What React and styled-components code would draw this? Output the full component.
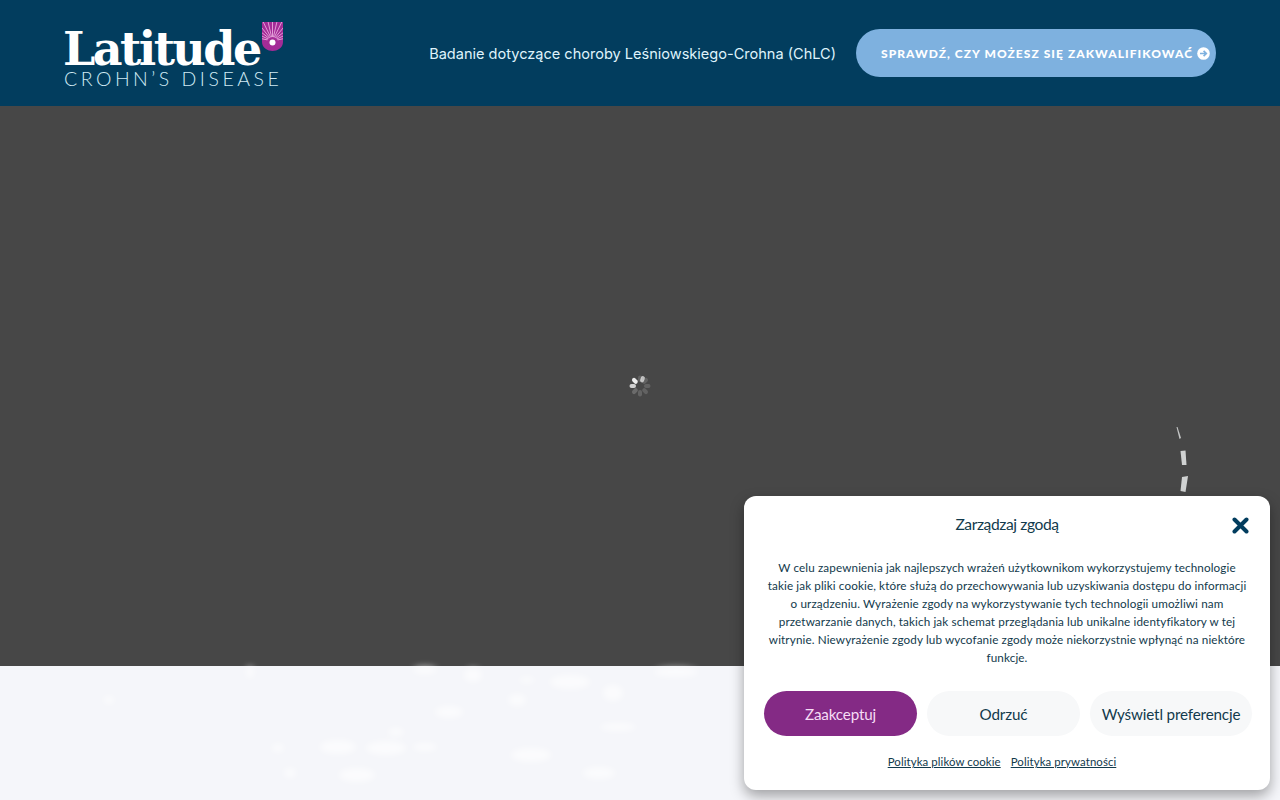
import React from "react";
import styled, { createGlobalStyle } from "styled-components";

const Global = createGlobalStyle`
  html, body { margin: 0; padding: 0; height: 100%; overflow: hidden; background: #f5f6fa; }
  * { box-sizing: border-box; }
`;

const Page = styled.div`
  position: relative;
  width: 1280px;
  height: 800px;
  overflow: hidden;
  display: flex;
  flex-direction: column;
`;

const Header = styled.header`
  height: 106px;
  flex: none;
  background: #023d5e;
  display: flex;
  align-items: center;
  justify-content: space-between;
  padding: 0 64px;
`;

const Logo = styled.div`
  position: relative;
  width: 220px;
  height: 68px;
  margin-top: 3px;
  display: flex;
  flex-direction: column;
`;

const LogoWord = styled.div`
  font-family: "DejaVu Serif", serif;
  font-weight: 700;
  font-size: 46px;
  line-height: 42px;
  margin-top: 7px;
  margin-left: -1px;
  letter-spacing: -2.55px;
  color: #fff;
  white-space: nowrap;
`;

const LogoSub = styled.div`
  font-family: "Lato", sans-serif;
  font-weight: 300;
  font-size: 19.5px;
  line-height: 18px;
  letter-spacing: 3.5px;
  color: #cfeaf4;
  white-space: nowrap;
`;

const LogoBadge = styled.svg`
  position: absolute;
  right: 0;
  top: 0;
`;

const Nav = styled.nav`
  display: flex;
  align-items: center;
  gap: 20px;
`;

const NavLink = styled.a`
  font-family: "Inter", sans-serif;
  font-size: 14.56px;
  font-weight: 400;
  color: #dff3fb;
  white-space: nowrap;
  position: relative;
  top: 1px;
`;

const Cta = styled.a`
  width: 360px;
  height: 48px;
  border-radius: 24px;
  background: #7eb1df;
  display: flex;
  align-items: center;
  padding-left: 25px;
  gap: 4px;
  color: #fff;
  font-family: "Lato", sans-serif;
  font-weight: 900;
  font-size: 12px;
  letter-spacing: 1.05px;
  white-space: nowrap;
`;

const Hero = styled.section`
  position: relative;
  height: 560px;
  flex: none;
  background: #474747;
`;

const Spinner = styled.svg`
  position: absolute;
  left: 628px;
  top: 268px;
  filter: blur(0.7px);
`;

const Road = styled.svg`
  position: absolute;
  left: 1170px;
  top: 318px;
`;

const Lower = styled.section`
  flex: 1;
  position: relative;
  background: #f5f6fa;
`;

const Blobs = styled.svg`
  position: absolute;
  inset: 0;
  filter: blur(3px);
`;

const Dialog = styled.aside`
  position: absolute;
  left: 744px;
  top: 496px;
  width: 526px;
  height: 294px;
  background: #fff;
  border-radius: 12px;
  box-shadow: 0 6px 14px rgba(0, 0, 0, 0.35);
  color: #123a4c;
  font-family: "Lato", sans-serif;
  display: flex;
  flex-direction: column;
  align-items: center;
  padding: 18px 20px 0;
`;

const Title = styled.h2`
  margin: 0;
  font-family: "Lato", sans-serif;
  font-weight: 400;
  font-size: 15.6px;
  letter-spacing: -0.4px;
  line-height: 20px;
  color: #123a4c;
  height: 20px;
`;

const Close = styled.svg`
  position: absolute;
  right: 21px;
  top: 21px;
`;

const Body = styled.p`
  margin: 24px 0 0;
  font-size: 11.7px;
  line-height: 18px;
  letter-spacing: 0.12px;
  text-align: center;
  width: 486px;
  white-space: nowrap;
  color: #123a4c;
`;

const Buttons = styled.div`
  display: grid;
  grid-template-columns: 153px 153px 162px;
  gap: 10px;
  margin-top: 25px;
  width: 486px;
`;

const Btn = styled.button`
  height: 45px;
  border: 0;
  padding: 0;
  border-radius: 23px;
  background: ${p => (p.$primary ? "#842a85" : "#f7f8f9")};
  color: ${p => (p.$primary ? "#f6dcf5" : "#123a4c")};
  font-family: "Lato", sans-serif;
  font-size: 15.2px;
  letter-spacing: -0.15px;
  white-space: nowrap;
`;

const Links = styled.div`
  display: flex;
  gap: 10px;
  margin-top: 17px;
  margin-right: 10px;
`;

const PolicyLink = styled.a`
  font-size: 11.4px;
  line-height: 18px;
  letter-spacing: 0.1px;
  color: #123a4c;
  text-decoration: underline;
`;

const rays = Array.from({ length: 13 }, (_, i) => -78 + i * 13);

const blobs = [
  [473, 9, 9, 7], [425, 4, 12, 4], [570, 16, 20, 7], [613, 27, 10, 8],
  [517, 34, 9, 6], [449, 46, 14, 6], [527, 14, 8, 3], [338, 81, 18, 7],
  [386, 82, 20, 7], [425, 81, 12, 4], [531, 89, 20, 7], [599, 107, 16, 6],
  [357, 109, 18, 7], [290, 107, 6, 5], [278, 82, 6, 4], [618, 61, 18, 4],
  [676, 6, 22, 5], [396, 66, 8, 4], [109, 34, 5, 4], [250, 6, 4, 6],
];

export default function App() {
  return (
    <Page>
      <Global />
      <Header>
        <Logo>
          <LogoWord>Latitude</LogoWord>
          <LogoSub>CROHN’S DISEASE</LogoSub>
          <LogoBadge width="23" height="31" viewBox="0 0 23 31">
            <path d="M1 1 H22 V21 C22 27 16 30 11.5 30 C7 30 1 27 1 21 Z" fill="#a42c97" />
            <clipPath id="shield">
              <path d="M1 1 H22 V21 C22 27 16 30 11.5 30 C7 30 1 27 1 21 Z" />
            </clipPath>
            <g clipPath="url(#shield)">
              {rays.map(a => (
                <line
                  key={a}
                  x1="11.5"
                  y1="20"
                  x2={11.5 + 26 * Math.sin((a * Math.PI) / 180)}
                  y2={20 - 26 * Math.cos((a * Math.PI) / 180)}
                  stroke="#e9a9df"
                  strokeWidth="0.9"
                />
              ))}
            </g>
            <circle cx="11.5" cy="21.5" r="5.5" fill="#a42c97" />
            <circle cx="11.5" cy="21.5" r="3" fill="#fff" />
          </LogoBadge>
        </Logo>
        <Nav>
          <NavLink>Badanie dotyczące choroby Leśniowskiego-Crohna (ChLC)</NavLink>
          <Cta>
            SPRAWDŹ, CZY MOŻESZ SIĘ ZAKWALIFIKOWAĆ
            <svg width="13" height="13" viewBox="0 0 13 13">
              <circle cx="6.5" cy="6.5" r="6.3" fill="#fff" />
              <path d="M3 6.5 H9 M6.6 3.8 L9.3 6.5 L6.6 9.2" fill="none" stroke="#7eb1df" strokeWidth="1.7" />
            </svg>
          </Cta>
        </Nav>
      </Header>
      <Hero>
        <Spinner width="24" height="24" viewBox="0 0 24 24">
          {[
            [0, 0.14], [45, 0.15], [90, 0.15], [135, 0.15], [180, 0.16],
            [225, 0.2], [270, 0.75], [315, 0.9], [20, 0.65],
          ].map(([a, o]) => (
            <rect
              key={a}
              x="10"
              y="1.5"
              width="4"
              height="6.5"
              rx="2"
              fill="#fff"
              opacity={o}
              transform={`rotate(${a} 12 12)`}
            />
          ))}
        </Spinner>
        <Road width="24" height="72" viewBox="0 0 24 72">
          <path d="M6.5 3 L7.5 3 L11 14 L9.5 15 Z" fill="#c4c6c6" />
          <path d="M10.5 27 L15.5 26.5 L16.5 41 L12 41 Z" fill="#d0d2d2" />
          <path d="M12 53 L18 52 L15.5 68 L10.5 67 Z" fill="#d0d2d2" />
        </Road>
      </Hero>
      <Lower>
        <Blobs width="1280" height="134" viewBox="0 0 1280 134">
          <g fill="#ffffff" opacity="0.6">
            {blobs.map(([cx, cy, rx, ry]) => (
              <ellipse key={`${cx}-${cy}`} cx={cx} cy={cy} rx={rx} ry={ry} />
            ))}
          </g>
        </Blobs>
      </Lower>
      <Dialog>
        <Title>Zarządzaj zgodą</Title>
        <Close width="17" height="17" viewBox="0 0 17 17">
          <path d="M2.5 2.5 L14.5 14.5 M14.5 2.5 L2.5 14.5" stroke="#023d5e" strokeWidth="4" strokeLinecap="round" />
        </Close>
        <Body>
          W celu zapewnienia jak najlepszych wrażeń użytkownikom wykorzystujemy technologie
          <br />
          takie jak pliki cookie, które służą do przechowywania lub uzyskiwania dostępu do informacji
          <br />
          o urządzeniu. Wyrażenie zgody na wykorzystywanie tych technologii umożliwi nam
          <br />
          przetwarzanie danych, takich jak schemat przeglądania lub unikalne identyfikatory w tej
          <br />
          witrynie. Niewyrażenie zgody lub wycofanie zgody może niekorzystnie wpłynąć na niektóre
          <br />
          funkcje.
        </Body>
        <Buttons>
          <Btn $primary>Zaakceptuj</Btn>
          <Btn>Odrzuć</Btn>
          <Btn>Wyświetl preferencje</Btn>
        </Buttons>
        <Links>
          <PolicyLink>Polityka plików cookie</PolicyLink>
          <PolicyLink>Polityka prywatności</PolicyLink>
        </Links>
      </Dialog>
    </Page>
  );
}
